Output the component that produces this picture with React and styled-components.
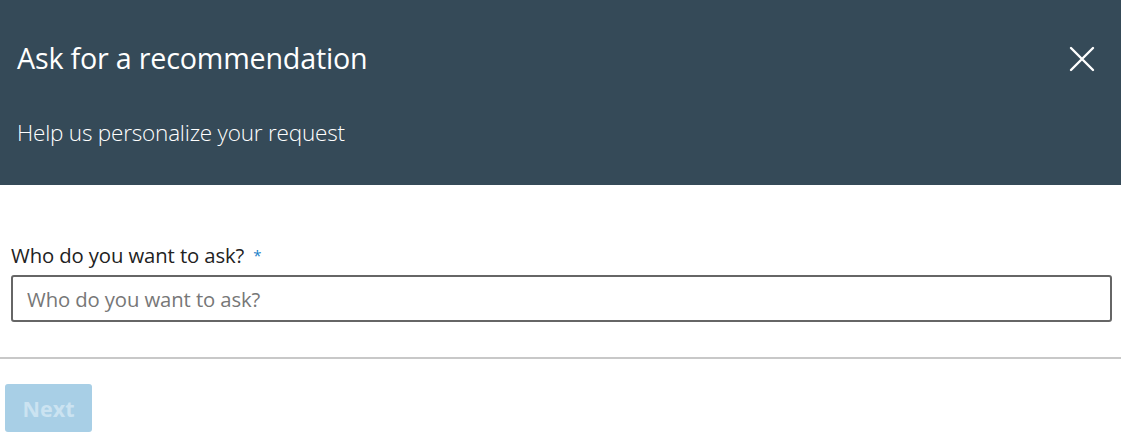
import React from 'react';
import styled, { createGlobalStyle } from 'styled-components';

const GlobalStyle = createGlobalStyle`
  body {
    margin: 0;
    background: #fff;
    font-family: "Open Sans", "Noto Sans", Arial, sans-serif;
  }
`;

const Dialog = styled.div`
  width: 1121px;
  display: flex;
  flex-direction: column;
`;

const Header = styled.header`
  background: #354a58;
  color: #fff;
  height: 185px;
  box-sizing: border-box;
  padding: 38px 16px 0 17px;
  position: relative;
`;

const Title = styled.h2`
  margin: 0;
  font-size: 28.7px;
  font-weight: 400;
  line-height: 40px;
  letter-spacing: -0.2px;
`;

const Subtitle = styled.p`
  margin: 40px 0 0;
  font-size: 22.5px;
  font-weight: 300;
  line-height: 30px;
  letter-spacing: -0.2px;
`;

const CloseButton = styled.button`
  position: absolute;
  top: 42px;
  right: 22px;
  width: 34px;
  height: 34px;
  padding: 0;
  border: 0;
  background: none;
  cursor: pointer;
  display: flex;
  align-items: center;
  justify-content: center;
`;

const Body = styled.div`
  padding: 56px 9px 35px 11px;
  border-bottom: 2px solid #c8c8c8;
`;

const Label = styled.label`
  display: block;
  font-size: 20.3px;
  color: #222;
  line-height: 28px;
  margin-bottom: 6px;
  letter-spacing: -0.1px;
`;

const Required = styled.span`
  color: #1a82c9;
  font-size: 15px;
  margin-left: 9px;
  vertical-align: 2px;
`;

const Input = styled.input`
  display: block;
  width: 100%;
  box-sizing: border-box;
  height: 47px;
  border: 2px solid #666;
  border-radius: 3px;
  padding: 0 14px;
  font-family: inherit;
  font-size: 20.3px;
  color: #222;
  letter-spacing: -0.1px;
  &::placeholder {
    color: #777;
  }
`;

const Footer = styled.div`
  padding: 25px 5px 7px;
`;

const NextButton = styled.button`
  width: 87px;
  height: 48px;
  border: 0;
  border-radius: 3px;
  background: #a8cfe6;
  color: #cbe3f1;
  font-family: inherit;
  font-size: 21.5px;
  font-weight: 700;
`;

export default function App() {
  return (
    <>
      <GlobalStyle />
      <Dialog>
        <Header>
          <Title>Ask for a recommendation</Title>
          <Subtitle>Help us personalize your request</Subtitle>
          <CloseButton aria-label="Dismiss">
            <svg width="26" height="26" viewBox="0 0 26 26">
              <path d="M2 2 L24 24 M24 2 L2 24" stroke="#fff" strokeWidth="2.4" strokeLinecap="round" />
            </svg>
          </CloseButton>
        </Header>
        <Body>
          <Label htmlFor="ask">
            Who do you want to ask?<Required>*</Required>
          </Label>
          <Input id="ask" placeholder="Who do you want to ask?" />
        </Body>
        <Footer>
          <NextButton disabled>Next</NextButton>
        </Footer>
      </Dialog>
    </>
  );
}
